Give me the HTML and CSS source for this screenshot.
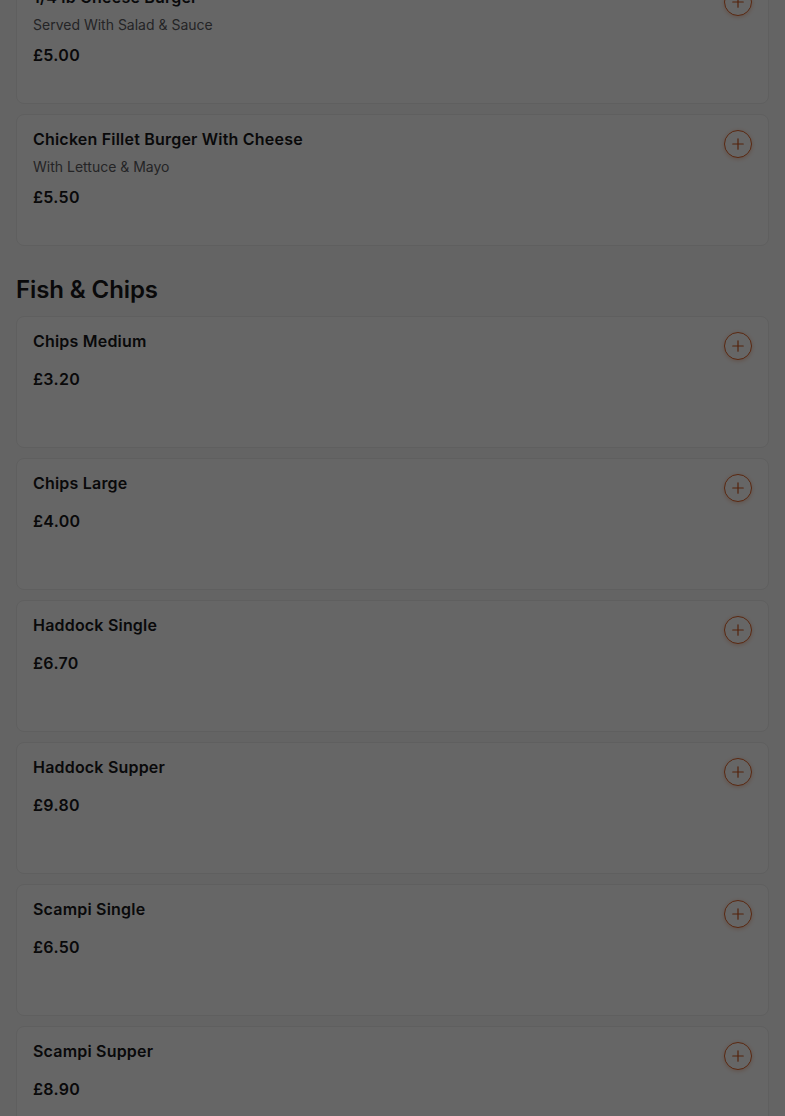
FILE: index.html
```html
<!DOCTYPE html>
<html lang="en">
  <head>
    <meta charset="UTF-8" />
    <meta name="viewport" content="width=device-width, initial-scale=1.0" />
    <title>Menu</title>
    <link rel="stylesheet" href="styles.css">
  </head>
  <body>
    <main class="menu">
      <section class="category">
        <div class="item">
          <div class="info">
            <h3 class="name">1/4 lb Cheese Burger</h3>
            <p class="desc">Served With Salad &amp; Sauce</p>
            <p class="price">£5.00</p>
          </div>
          <button class="add" aria-label="Add"><svg viewBox="0 0 24 24"><path d="M12 5v14M5 12h14" /></svg></button>
        </div>
        <div class="item">
          <div class="info">
            <h3 class="name">Chicken Fillet Burger With Cheese</h3>
            <p class="desc">With Lettuce &amp; Mayo</p>
            <p class="price">£5.50</p>
          </div>
          <button class="add" aria-label="Add"><svg viewBox="0 0 24 24"><path d="M12 5v14M5 12h14" /></svg></button>
        </div>
      </section>

      <section class="category">
        <h2 class="cat-title">Fish &amp; Chips</h2>
        <div class="item">
          <div class="info">
            <h3 class="name">Chips Medium</h3>
            <p class="price">£3.20</p>
          </div>
          <button class="add" aria-label="Add"><svg viewBox="0 0 24 24"><path d="M12 5v14M5 12h14" /></svg></button>
        </div>
        <div class="item">
          <div class="info">
            <h3 class="name">Chips Large</h3>
            <p class="price">£4.00</p>
          </div>
          <button class="add" aria-label="Add"><svg viewBox="0 0 24 24"><path d="M12 5v14M5 12h14" /></svg></button>
        </div>
        <div class="item">
          <div class="info">
            <h3 class="name">Haddock Single</h3>
            <p class="price">£6.70</p>
          </div>
          <button class="add" aria-label="Add"><svg viewBox="0 0 24 24"><path d="M12 5v14M5 12h14" /></svg></button>
        </div>
        <div class="item">
          <div class="info">
            <h3 class="name">Haddock Supper</h3>
            <p class="price">£9.80</p>
          </div>
          <button class="add" aria-label="Add"><svg viewBox="0 0 24 24"><path d="M12 5v14M5 12h14" /></svg></button>
        </div>
        <div class="item">
          <div class="info">
            <h3 class="name">Scampi Single</h3>
            <p class="price">£6.50</p>
          </div>
          <button class="add" aria-label="Add"><svg viewBox="0 0 24 24"><path d="M12 5v14M5 12h14" /></svg></button>
        </div>
        <div class="item">
          <div class="info">
            <h3 class="name">Scampi Supper</h3>
            <p class="price">£8.90</p>
          </div>
          <button class="add" aria-label="Add"><svg viewBox="0 0 24 24"><path d="M12 5v14M5 12h14" /></svg></button>
        </div>
      </section>
    </main>
    <div class="overlay"></div>
  </body>
</html>
```
FILE: styles.css
```css
body {
  margin: 0;
  background: #fafafa;
  font-family: "Inter", "Roboto", sans-serif;
  color: #18181b;
}
.menu {
  margin-top: -28px;
  padding: 0 16px;
}
.category {
  display: flex;
  flex-direction: column;
  gap: 10px;
}
.category + .category {
  margin-top: 28px;
}
.cat-title {
  margin: 0;
  font-size: 24px;
  line-height: 32px;
  font-weight: 600;
  letter-spacing: -0.1px;
}
.item {
  display: flex;
  align-items: flex-start;
  min-height: 106px;
  padding: 12px 16px;
  background: #fff;
  border: 1px solid #ededed;
  border-radius: 8px;
}
.info {
  flex: 1;
  display: flex;
  flex-direction: column;
}
.name {
  margin: 0 0 6px;
  font-size: 16px;
  line-height: 24px;
  font-weight: 600;
  letter-spacing: 0.2px;
}
.desc {
  margin: 0;
  font-size: 14px;
  line-height: 20px;
  color: #5b5b60;
}
.price {
  margin: 8px 0 0;
  font-size: 16px;
  line-height: 24px;
  font-weight: 600;
  letter-spacing: 0.3px;
}
.add {
  margin-top: 3px;
  width: 28px;
  height: 28px;
  padding: 0;
  border: 1.5px solid #e0642a;
  border-radius: 50%;
  background: #fff;
  box-shadow: 0 1px 4px rgba(224, 100, 42, 0.35);
  display: flex;
  align-items: center;
  justify-content: center;
}
.add svg {
  width: 18px;
  height: 18px;
  fill: none;
  stroke: #d2561c;
  stroke-width: 1.6;
  stroke-linecap: round;
}
.overlay {
  position: fixed;
  inset: 0;
  background: rgba(0, 0, 0, 0.6);
}
```
